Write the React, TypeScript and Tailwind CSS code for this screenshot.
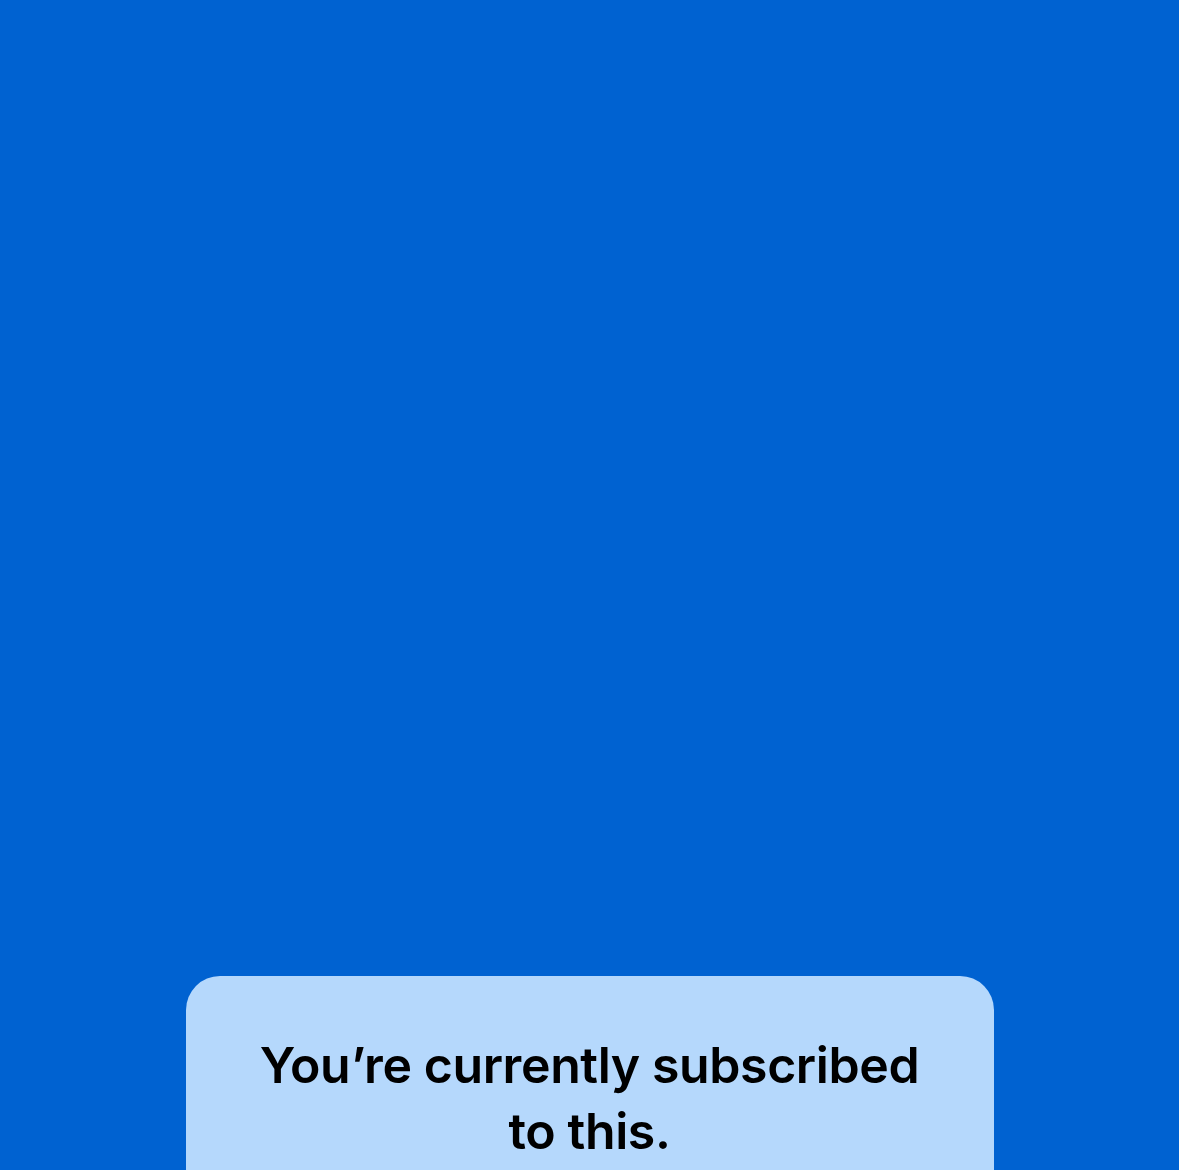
export default function App() {
  return (
    <div className="h-[1170px] w-full overflow-hidden bg-[#0062d1] pt-[976px]">
      {/* Subscription sheet */}
      <div className="mx-auto h-[400px] w-[808px] rounded-t-[34px] bg-[#b5d8fc] px-10 pt-[56px]">
        <p className="text-center font-['Inter',sans-serif] text-[50px] font-semibold leading-[66px] tracking-[-0.4px] text-black">
          You’re currently subscribed
          <br />
          to this.
        </p>
      </div>
    </div>
  );
}
